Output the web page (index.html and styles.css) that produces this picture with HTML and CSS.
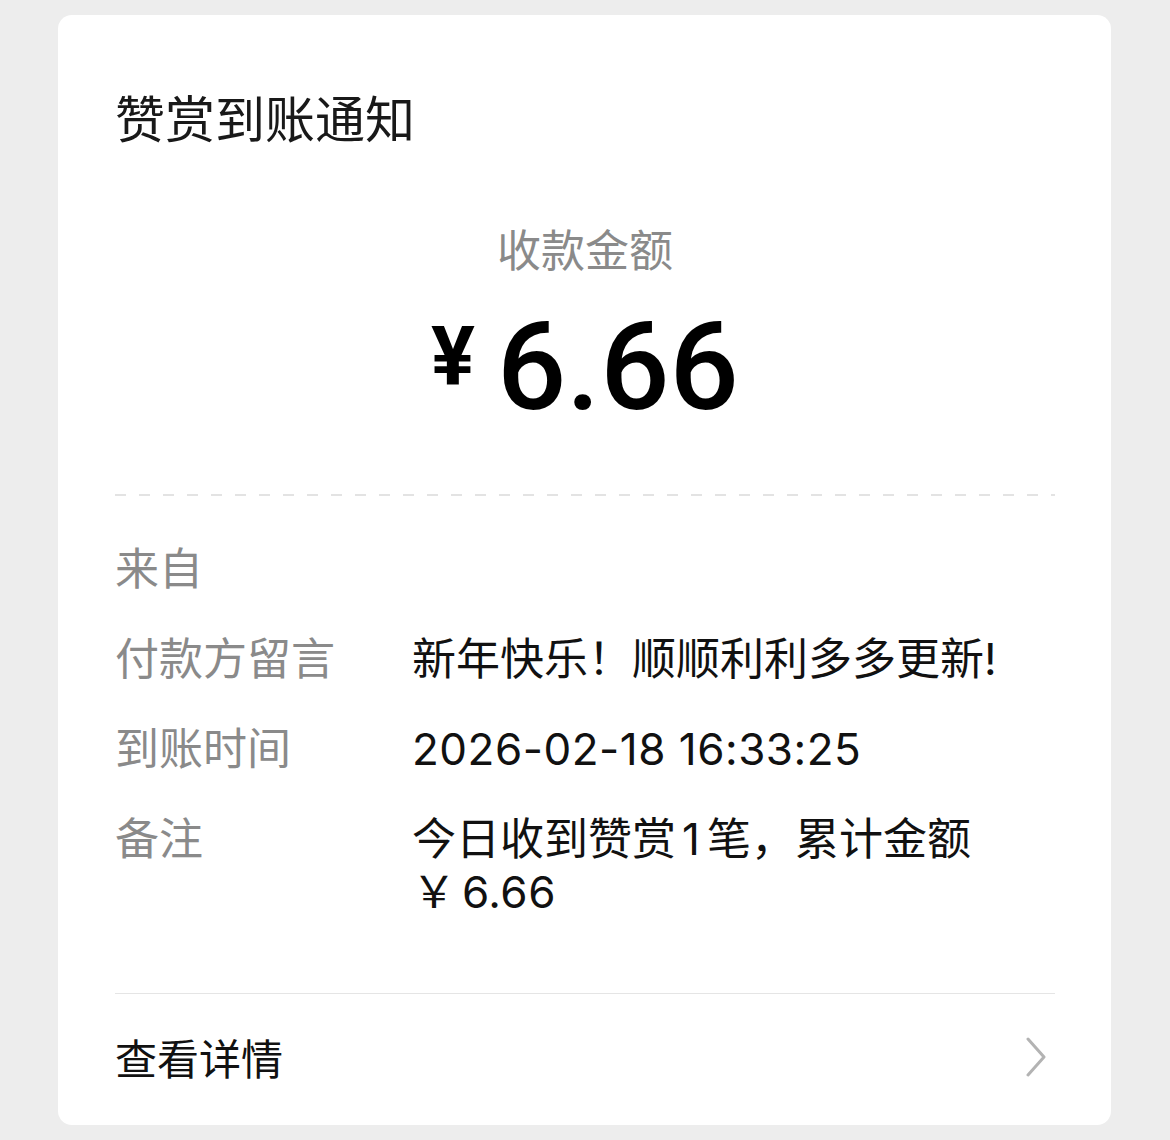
FILE: index.html
```html
<!DOCTYPE html>
<html lang="zh-CN">
<head>
<meta charset="utf-8">
<title>赞赏到账通知</title>
<link rel="stylesheet" href="styles.css">
</head>
<body>
<section class="notice-card">
  <h1 class="notice-title">赞赏到账通知</h1>

  <div class="amount-block">
    <div class="amount-label">收款金额</div>
    <div class="amount-value">
      <span class="amount-currency">¥</span>
      <span class="amount-number">6.66</span>
    </div>
  </div>

  <div class="dashed-line"></div>

  <dl class="notice-rows">
    <div class="notice-row">
      <dt>来自</dt>
      <dd></dd>
    </div>
    <div class="notice-row">
      <dt>付款方留言</dt>
      <dd>新年快乐！顺顺利利多多更新!</dd>
    </div>
    <div class="notice-row">
      <dt>到账时间</dt>
      <dd class="num">2026-02-18 16:33:25</dd>
    </div>
    <div class="notice-row">
      <dt>备注</dt>
      <dd>今日收到赞赏<span class="digit">1</span>笔，累计金额<span class="nowrap">￥<span class="num total">6.66</span></span></dd>
    </div>
  </dl>

  <a class="notice-footer" href="#">
    <span>查看详情</span>
    <svg class="chevron" width="24" height="40" viewBox="0 0 24 40">
      <polyline points="3,2 19,20 3,38" fill="none" stroke="#b3b3b3" stroke-width="3" stroke-linecap="round" stroke-linejoin="round"/>
    </svg>
  </a>
</section>
</body>
</html>
```

FILE: styles.css
```css
body {
  margin: 0;
  padding: 15px 59px 15px 58px;
  background: #ededed;
  font-family: "Inter", "Noto Sans CJK SC", sans-serif;
}

/* white card */
.notice-card {
  background: #fff;
  border-radius: 14px;
  height: 1110px;
  box-sizing: border-box;
  padding: 71px 56px 0 57px;
  display: flex;
  flex-direction: column;
}

.notice-title {
  margin: 0;
  font-family: "Noto Sans CJK SC", sans-serif;
  font-size: 50px;
  line-height: 60px;
  font-weight: 400;
  color: #191919;
}

.amount-block {
  margin-top: 74px;
  text-align: center;
}

.amount-label {
  font-family: "Noto Sans CJK SC", sans-serif;
  font-size: 44px;
  line-height: 56px;
  color: #8a8a8a;
}

.amount-value {
  margin-top: 31px;
  display: flex;
  justify-content: center;
  align-items: flex-start;
  gap: 22px;
  color: #000;
  font-family: "Roboto", sans-serif;
}

.amount-currency {
  font-size: 82px;
  line-height: 82px;
  font-weight: 700;
  margin-top: 8px;
}

.amount-number {
  font-size: 122px;
  line-height: 122px;
  font-weight: 500;
}

.dashed-line {
  margin-top: 65px;
  height: 2px;
  background: repeating-linear-gradient(90deg, #e3e3e3 0 11px, transparent 11px 24px);
}

.notice-rows {
  margin: 47px 0 0;
  padding-bottom: 74px;
  border-bottom: 1px solid #e5e5e5;
  display: flex;
  flex-direction: column;
  gap: 37px;
}

.notice-row {
  display: grid;
  grid-template-columns: 297px 1fr;
  font-size: 44px;
  line-height: 53px;
  min-height: 53px;
}

.notice-row dt {
  color: #8a8a8a;
}

.notice-row dd {
  margin: 0;
  color: #111;
}

.num {
  letter-spacing: 0.5px;
}

.digit {
  margin: 0 7px 0 6px;
}

.nowrap {
  white-space: nowrap;
}

.total {
  margin-left: 6px;
}

.notice-footer {
  display: flex;
  align-items: center;
  justify-content: space-between;
  padding: 36px 6px 42px 0;
  font-family: "Noto Sans CJK SC", sans-serif;
  font-size: 42px;
  line-height: 53px;
  color: #111;
  text-decoration: none;
}

.chevron {
  display: block;
}
```
